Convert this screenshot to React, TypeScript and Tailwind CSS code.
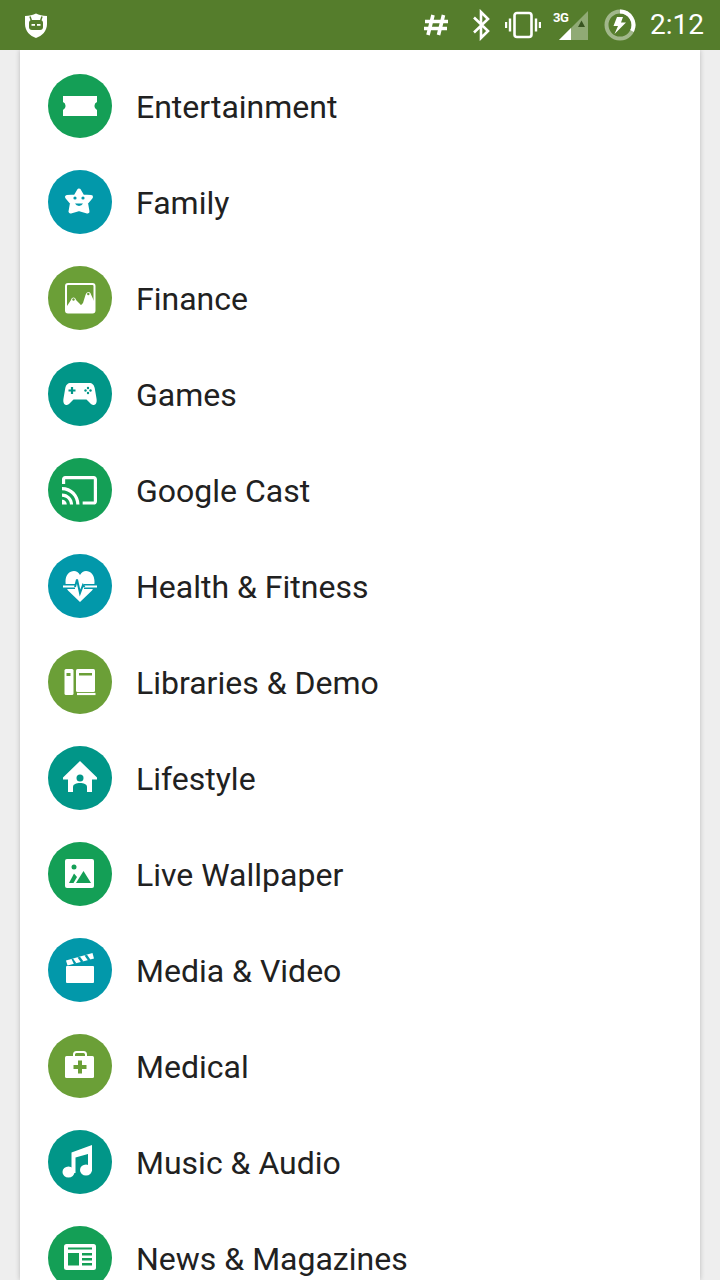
import type { ReactNode } from "react"

const GREEN = "bg-[#149f56]"
const BLUE = "bg-[#0298aa]"
const OLIVE = "bg-[#6b9f37]"
const TEAL = "bg-[#019688]"

const categories: { name: string; bg: string; icon: ReactNode }[] = [
  {
    name: "Entertainment",
    bg: GREEN,
    icon: <path fill="#fff" d="M15 22H49V28a4.400 4.400 0 0 0 0 8V42H15V36a4.400 4.400 0 0 0 0-8Z" />,
  },
  {
    name: "Family",
    bg: BLUE,
    icon: (
      <>
        <path
          fill="#fff"
          stroke="#fff"
          strokeWidth="4"
          strokeLinejoin="round"
          d="M31 20.500L34.500 26.500L43 27L38 33L39.500 41.500L31 39L22.500 41.500L24 33L19 27L27.500 26.500Z"
        />
        <circle cx="27" cy="28" r="1.600" fill="#0298aa" />
        <circle cx="35" cy="28" r="1.600" fill="#0298aa" />
        <path d="M27 33.500a4.500 4.500 0 0 0 8 0Z" fill="#0298aa" />
      </>
    ),
  },
  {
    name: "Finance",
    bg: OLIVE,
    icon: (
      <>
        <rect x="18" y="18" width="28.500" height="28.500" rx="2" fill="none" stroke="#fff" strokeWidth="2" />
        <path
          fill="#fff"
          d="M19 47V40L23 34C24 30.500 27.500 31 28 34L31 37C32 38.500 34 38.500 35 37L37.500 29C38.500 25 42.500 25 43 28.500L46 35V47Z"
        />
        <circle cx="25.500" cy="33.500" r="1.200" fill="#6b9f37" />
        <circle cx="33" cy="37.500" r="1.200" fill="#6b9f37" />
        <circle cx="40.300" cy="28" r="1.200" fill="#6b9f37" />
      </>
    ),
  },
  {
    name: "Games",
    bg: TEAL,
    icon: (
      <>
        <path
          fill="#fff"
          d="M23 21H41C44.500 21 46 23 46.700 26L48.500 36.500C49.300 41 47.500 43 45.500 43C43.800 43 42.800 42 41.500 40.500L38.500 37.500H25.500L22.500 40.500C21.200 42 20.200 43 18.500 43C16.500 43 14.700 41 15.500 36.500L17.300 26C18 23 19.500 21 23 21Z"
        />
        <path d="M24 25V32M20.500 28.500H27.500" stroke="#019688" strokeWidth="2.200" />
        <circle cx="40" cy="26" r="1.200" fill="#019688" />
        <circle cx="40" cy="31" r="1.200" fill="#019688" />
        <circle cx="37.500" cy="28.500" r="1.200" fill="#019688" />
        <circle cx="42.500" cy="28.500" r="1.200" fill="#019688" />
      </>
    ),
  },
  {
    name: "Google Cast",
    bg: GREEN,
    icon: (
      <path
        fill="#fff"
        transform="translate(12.400 13.200) scale(1.590)"
        d="M21 3H3c-1.100 0-2 .9-2 2v3h2V5h18v14h-7v2h7c1.100 0 2-.9 2-2V5c0-1.100-.9-2-2-2zM1 18v3h3c0-1.660-1.340-3-3-3zm0-4v2c2.760 0 5 2.240 5 5h2c0-3.870-3.130-7-7-7zm0-4v2c4.970 0 9 4.030 9 9h2c0-6.080-4.930-11-11-11z"
      />
    ),
  },
  {
    name: "Health & Fitness",
    bg: BLUE,
    icon: (
      <>
        <path
          fill="#fff"
          d="M32 48L20 36.500C18 34 17.500 31 17.500 27.500C17.500 21 21.500 17 26 17C28.500 17 30.500 18.500 32 21C33.500 18.500 35.500 17 38 17C42.500 17 46.500 21 46.500 27.500C46.500 31 46 34 44 36.500Z"
        />
        <path fill="none" stroke="#0298aa" strokeWidth="5" d="M13 32.500H27M36 32.500H51" />
        <path fill="none" stroke="#fff" strokeWidth="2.200" d="M15 32.500H27M36 32.500H49" />
        <path fill="none" stroke="#0298aa" strokeWidth="2" d="M27 33L29 25.500L32 39L35 31L36.500 33" />
      </>
    ),
  },
  {
    name: "Libraries & Demo",
    bg: OLIVE,
    icon: (
      <>
        <rect x="16.500" y="19" width="9" height="26" rx="1.500" fill="#fff" />
        <rect x="18.500" y="23" width="4" height="3" fill="#6b9f37" />
        <rect x="28" y="19" width="19" height="23" rx="1.500" fill="#fff" />
        <rect x="31" y="23" width="13" height="2.500" fill="#6b9f37" />
        <path d="M29 44H47.500" stroke="#fff" strokeWidth="2.200" />
      </>
    ),
  },
  {
    name: "Lifestyle",
    bg: TEAL,
    icon: (
      <>
        <path fill="#fff" d="M32 15L49 31.500V33.500H44V46H20V33.500H15V31.500Z" />
        <circle cx="32" cy="32" r="3.500" fill="#019688" />
        <path d="M25 46V41C25 38 28.500 37 32 37C35.500 37 39 38 39 41V46Z" fill="#019688" />
      </>
    ),
  },
  {
    name: "Live Wallpaper",
    bg: GREEN,
    icon: (
      <>
        <rect x="17" y="17" width="29" height="29" rx="2" fill="#fff" />
        <circle cx="26" cy="25" r="2.500" fill="#149f56" />
        <path d="M21 41L26 31.500L29 35L25.500 41Z" fill="#149f56" />
        <path d="M28 41L35.500 29L43 41Z" fill="#149f56" />
      </>
    ),
  },
  {
    name: "Media & Video",
    bg: BLUE,
    icon: (
      <>
        <rect x="18" y="28" width="28" height="17" rx="1" fill="#fff" />
        <path fill="#fff" d="M18 22.500L44.500 15L46 20.500L19.500 27.500Z" />
        <path
          fill="#0298aa"
          d="M23.500 21L25 20.600L28.500 25.500L26 26.200ZM29.500 19.500L32 18.800L35.500 23.600L33 24.300ZM36.500 17.500L39 16.800L42.500 21.800L40 22.400Z"
        />
      </>
    ),
  },
  {
    name: "Medical",
    bg: OLIVE,
    icon: (
      <>
        <path fill="none" stroke="#fff" strokeWidth="2" d="M26 23V20.500C26 19 27 18 28.500 18H35.500C37 18 38 19 38 20.500V23" />
        <rect x="17" y="22" width="29" height="22" rx="1.500" fill="#fff" />
        <path d="M32 26.500V39.500M25.500 33H38.500" stroke="#6b9f37" strokeWidth="4" />
      </>
    ),
  },
  {
    name: "Music & Audio",
    bg: TEAL,
    icon: (
      <>
        <path fill="#fff" d="M23.500 22.500L44 15V41H40V24L27.500 27.500V43H23.500Z" />
        <ellipse cx="20.500" cy="42" rx="6" ry="5.500" fill="#fff" />
        <ellipse cx="38" cy="40" rx="6" ry="5.500" fill="#fff" />
      </>
    ),
  },
  {
    name: "News & Magazines",
    bg: GREEN,
    icon: (
      <>
        <rect x="16" y="18" width="32" height="26" rx="2.500" fill="#fff" />
        <rect x="20" y="21.500" width="24" height="2" fill="#149f56" />
        <rect x="20" y="27" width="11" height="12.500" fill="#149f56" />
        <rect x="34" y="27" width="10" height="2.500" fill="#149f56" />
        <rect x="34" y="32" width="10" height="2.500" fill="#149f56" />
        <rect x="34" y="37" width="10" height="2.500" fill="#149f56" />
      </>
    ),
  },
]

function StatusBar() {
  return (
    <div className="relative z-10 flex h-[50px] shrink-0 items-center bg-[#557d2c] text-white">
      <svg width="24" height="28" viewBox="0 0 24 28" className="ml-6">
        <path
          fill="#fff"
          d="M12 2.500C15 4 18.500 5 23 5V13C23 20 18 25 12 27C6 25 1 20 1 13V5C5.500 5 9 4 12 2.500Z"
        />
        <path d="M6 5.500L7.500 10M18 5.500L16.500 10" stroke="#557d2c" strokeWidth="1.500" />
        <rect x="5" y="9" width="14" height="10" rx="3" fill="#557d2c" />
        <rect x="7.500" y="13" width="3.500" height="1.800" fill="#fff" />
        <rect x="13" y="13" width="3.500" height="1.800" fill="#fff" />
      </svg>

      <svg width="26" height="22" viewBox="0 0 26 22" className="ml-auto">
        <path d="M10 1L5 21M20.500 1L15.500 21M2 7.500H25M1 14.500H24" stroke="#fff" strokeWidth="3.600" fill="none" />
      </svg>

      <svg width="18" height="32" viewBox="0 0 18 32" className="ml-[23px]">
        <path d="M2 8.500L16 22L9 29V3L16 10L2 23.500" stroke="#fff" strokeWidth="2.600" fill="none" />
      </svg>

      <svg width="36" height="28" viewBox="0 0 36 28" className="ml-[15px]">
        <rect x="9.500" y="2" width="17" height="24" rx="2.500" fill="none" stroke="#fff" strokeWidth="2.600" />
        <path d="M5 7.500V20.500M1 11V17M31 7.500V20.500M35 11V17" stroke="#fff" strokeWidth="2.400" />
      </svg>

      <div className="relative ml-[12px] h-[30px] w-[35px]">
        <svg width="29" height="29" viewBox="0 0 29 29" className="absolute bottom-0 right-0">
          <path d="M0 29L29 0V29Z" fill="#fff" fillOpacity="0.35" />
          <path d="M0 29L12 17V29Z" fill="#fff" />
          <path d="M19 16L22.500 9.500L26 16Z" fill="#2f4a17" fillOpacity="0.9" />
        </svg>
        <span className="absolute left-0 top-[1px] text-[13px] font-bold leading-[13px] tracking-[-0.5px] [font-family:Roboto,sans-serif]">
          3G
        </span>
      </div>

      <svg width="32" height="32" viewBox="0 0 32 32" className="ml-[16px]">
        <circle cx="16" cy="16" r="13.500" fill="none" stroke="#fff" strokeOpacity="0.45" strokeWidth="4" />
        <path d="M16 2.500A13.500 13.500 0 0 1 28 22" fill="none" stroke="#fff" strokeWidth="4" />
        <path fill="#fff" d="M19 8H13L9.500 17H14L10.500 25L22 13.500H17Z" />
      </svg>

      <span className="ml-[14px] mr-[16px] text-[28px] leading-none [font-family:Roboto,sans-serif]">2:12</span>
    </div>
  )
}

export default function App() {
  return (
    <div className="flex h-[1280px] flex-col overflow-hidden bg-[#eeeeee] [font-family:Roboto,sans-serif]">
      <StatusBar />
      <div className="mx-5 min-h-0 flex-1 bg-white pt-2 shadow-[0_0_5px_rgba(0,0,0,0.22)]">
        {categories.map((c) => (
          <div key={c.name} className="flex h-24 items-center pl-7">
            <div className={`h-16 w-16 shrink-0 rounded-full ${c.bg}`}>
              <svg width="64" height="64" viewBox="0 0 64 64">
                {c.icon}
              </svg>
            </div>
            <span className="ml-6 pt-0.5 text-[32px] text-[#212121]">{c.name}</span>
          </div>
        ))}
      </div>
    </div>
  )
}
